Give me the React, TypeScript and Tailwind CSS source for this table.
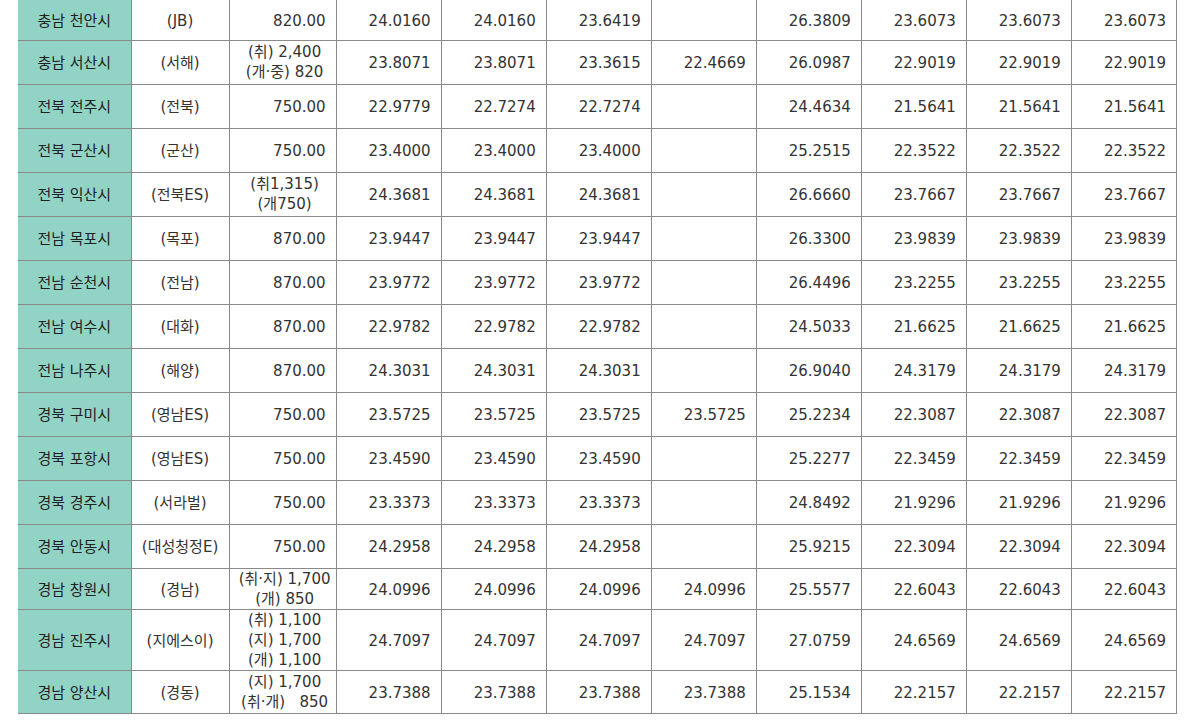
type Row = {
  region: string;
  company: string;
  base: string[];
  values: string[];
  h: string;
};

const rows: Row[] = [
  { region: "충남 천안시", company: "(JB)", base: ["820.00"], values: ["24.0160", "24.0160", "23.6419", "", "26.3809", "23.6073", "23.6073", "23.6073"], h: "h-[40px]" },
  { region: "충남 서산시", company: "(서해)", base: ["(취) 2,400", "(개·중) 820"], values: ["23.8071", "23.8071", "23.3615", "22.4669", "26.0987", "22.9019", "22.9019", "22.9019"], h: "h-[44px]" },
  { region: "전북 전주시", company: "(전북)", base: ["750.00"], values: ["22.9779", "22.7274", "22.7274", "", "24.4634", "21.5641", "21.5641", "21.5641"], h: "h-[44px]" },
  { region: "전북 군산시", company: "(군산)", base: ["750.00"], values: ["23.4000", "23.4000", "23.4000", "", "25.2515", "22.3522", "22.3522", "22.3522"], h: "h-[44px]" },
  { region: "전북 익산시", company: "(전북ES)", base: ["(취1,315)", "(개750)"], values: ["24.3681", "24.3681", "24.3681", "", "26.6660", "23.7667", "23.7667", "23.7667"], h: "h-[44px]" },
  { region: "전남 목포시", company: "(목포)", base: ["870.00"], values: ["23.9447", "23.9447", "23.9447", "", "26.3300", "23.9839", "23.9839", "23.9839"], h: "h-[44px]" },
  { region: "전남 순천시", company: "(전남)", base: ["870.00"], values: ["23.9772", "23.9772", "23.9772", "", "26.4496", "23.2255", "23.2255", "23.2255"], h: "h-[44px]" },
  { region: "전남 여수시", company: "(대화)", base: ["870.00"], values: ["22.9782", "22.9782", "22.9782", "", "24.5033", "21.6625", "21.6625", "21.6625"], h: "h-[44px]" },
  { region: "전남 나주시", company: "(해양)", base: ["870.00"], values: ["24.3031", "24.3031", "24.3031", "", "26.9040", "24.3179", "24.3179", "24.3179"], h: "h-[44px]" },
  { region: "경북 구미시", company: "(영남ES)", base: ["750.00"], values: ["23.5725", "23.5725", "23.5725", "23.5725", "25.2234", "22.3087", "22.3087", "22.3087"], h: "h-[44px]" },
  { region: "경북 포항시", company: "(영남ES)", base: ["750.00"], values: ["23.4590", "23.4590", "23.4590", "", "25.2277", "22.3459", "22.3459", "22.3459"], h: "h-[44px]" },
  { region: "경북 경주시", company: "(서라벌)", base: ["750.00"], values: ["23.3373", "23.3373", "23.3373", "", "24.8492", "21.9296", "21.9296", "21.9296"], h: "h-[44px]" },
  { region: "경북 안동시", company: "(대성청정E)", base: ["750.00"], values: ["24.2958", "24.2958", "24.2958", "", "25.9215", "22.3094", "22.3094", "22.3094"], h: "h-[44px]" },
  { region: "경남 창원시", company: "(경남)", base: ["(취·지) 1,700", "(개) 850"], values: ["24.0996", "24.0996", "24.0996", "24.0996", "25.5577", "22.6043", "22.6043", "22.6043"], h: "h-[40px]" },
  { region: "경남 진주시", company: "(지에스이)", base: ["(취) 1,100", "(지) 1,700", "(개) 1,100"], values: ["24.7097", "24.7097", "24.7097", "24.7097", "27.0759", "24.6569", "24.6569", "24.6569"], h: "h-[60px]" },
  { region: "경남 양산시", company: "(경동)", base: ["(지) 1,700", "(취·개)   850"], values: ["23.7388", "23.7388", "23.7388", "23.7388", "25.1534", "22.2157", "22.2157", "22.2157"], h: "h-[43px]" },
];

export default function App() {
  return (
    <div className="w-[1198px] h-[721px] overflow-hidden bg-white pl-[18px] font-['DejaVu_Sans','Noto_Sans_CJK_KR',sans-serif] text-[15px] leading-[20px] text-[#333]">
      <table className="table-fixed border-collapse w-[1159px]">
        <colgroup>
          <col className="w-[113px]" />
          <col className="w-[98px]" />
          <col className="w-[107px]" />
          <col className="w-[105px]" />
          <col className="w-[105px]" />
          <col className="w-[105px]" />
          <col className="w-[105px]" />
          <col className="w-[105px]" />
          <col className="w-[105px]" />
          <col className="w-[105px]" />
          <col className="w-[105px]" />
        </colgroup>
        <tbody>
          {rows.map((r, i) => (
            <tr key={r.region} className={r.h}>
              <td className={`border border-[#8a8a8a] border-l-0 bg-[#91d4c5] pt-[2px] pb-0 px-0 text-center align-middle text-[#222] ${i === 0 ? "border-t-0" : ""}`}>
                {r.region}
              </td>
              <td className={`border border-[#8a8a8a] pt-[2px] pb-0 px-0 text-center align-middle ${i === 0 ? "border-t-0" : ""}`}>
                {r.company}
              </td>
              {r.base.length === 1 ? (
                <td className={`border border-[#8a8a8a] pt-[2px] pb-0 pl-0 pr-[10px] text-right align-middle ${i === 0 ? "border-t-0" : ""}`}>
                  {r.base[0]}
                </td>
              ) : (
                <td className="border border-[#8a8a8a] p-0 pl-[4px] text-center align-middle whitespace-pre">
                  {r.base.map((b) => (
                    <div key={b}>{b}</div>
                  ))}
                </td>
              )}
              {r.values.map((v, j) => (
                <td
                  key={j}
                  className={`border border-[#8a8a8a] pt-[2px] pb-0 pl-0 pr-[10px] text-right align-middle ${i === 0 ? "border-t-0" : ""}`}
                >
                  {v}
                </td>
              ))}
            </tr>
          ))}
        </tbody>
      </table>
    </div>
  );
}
